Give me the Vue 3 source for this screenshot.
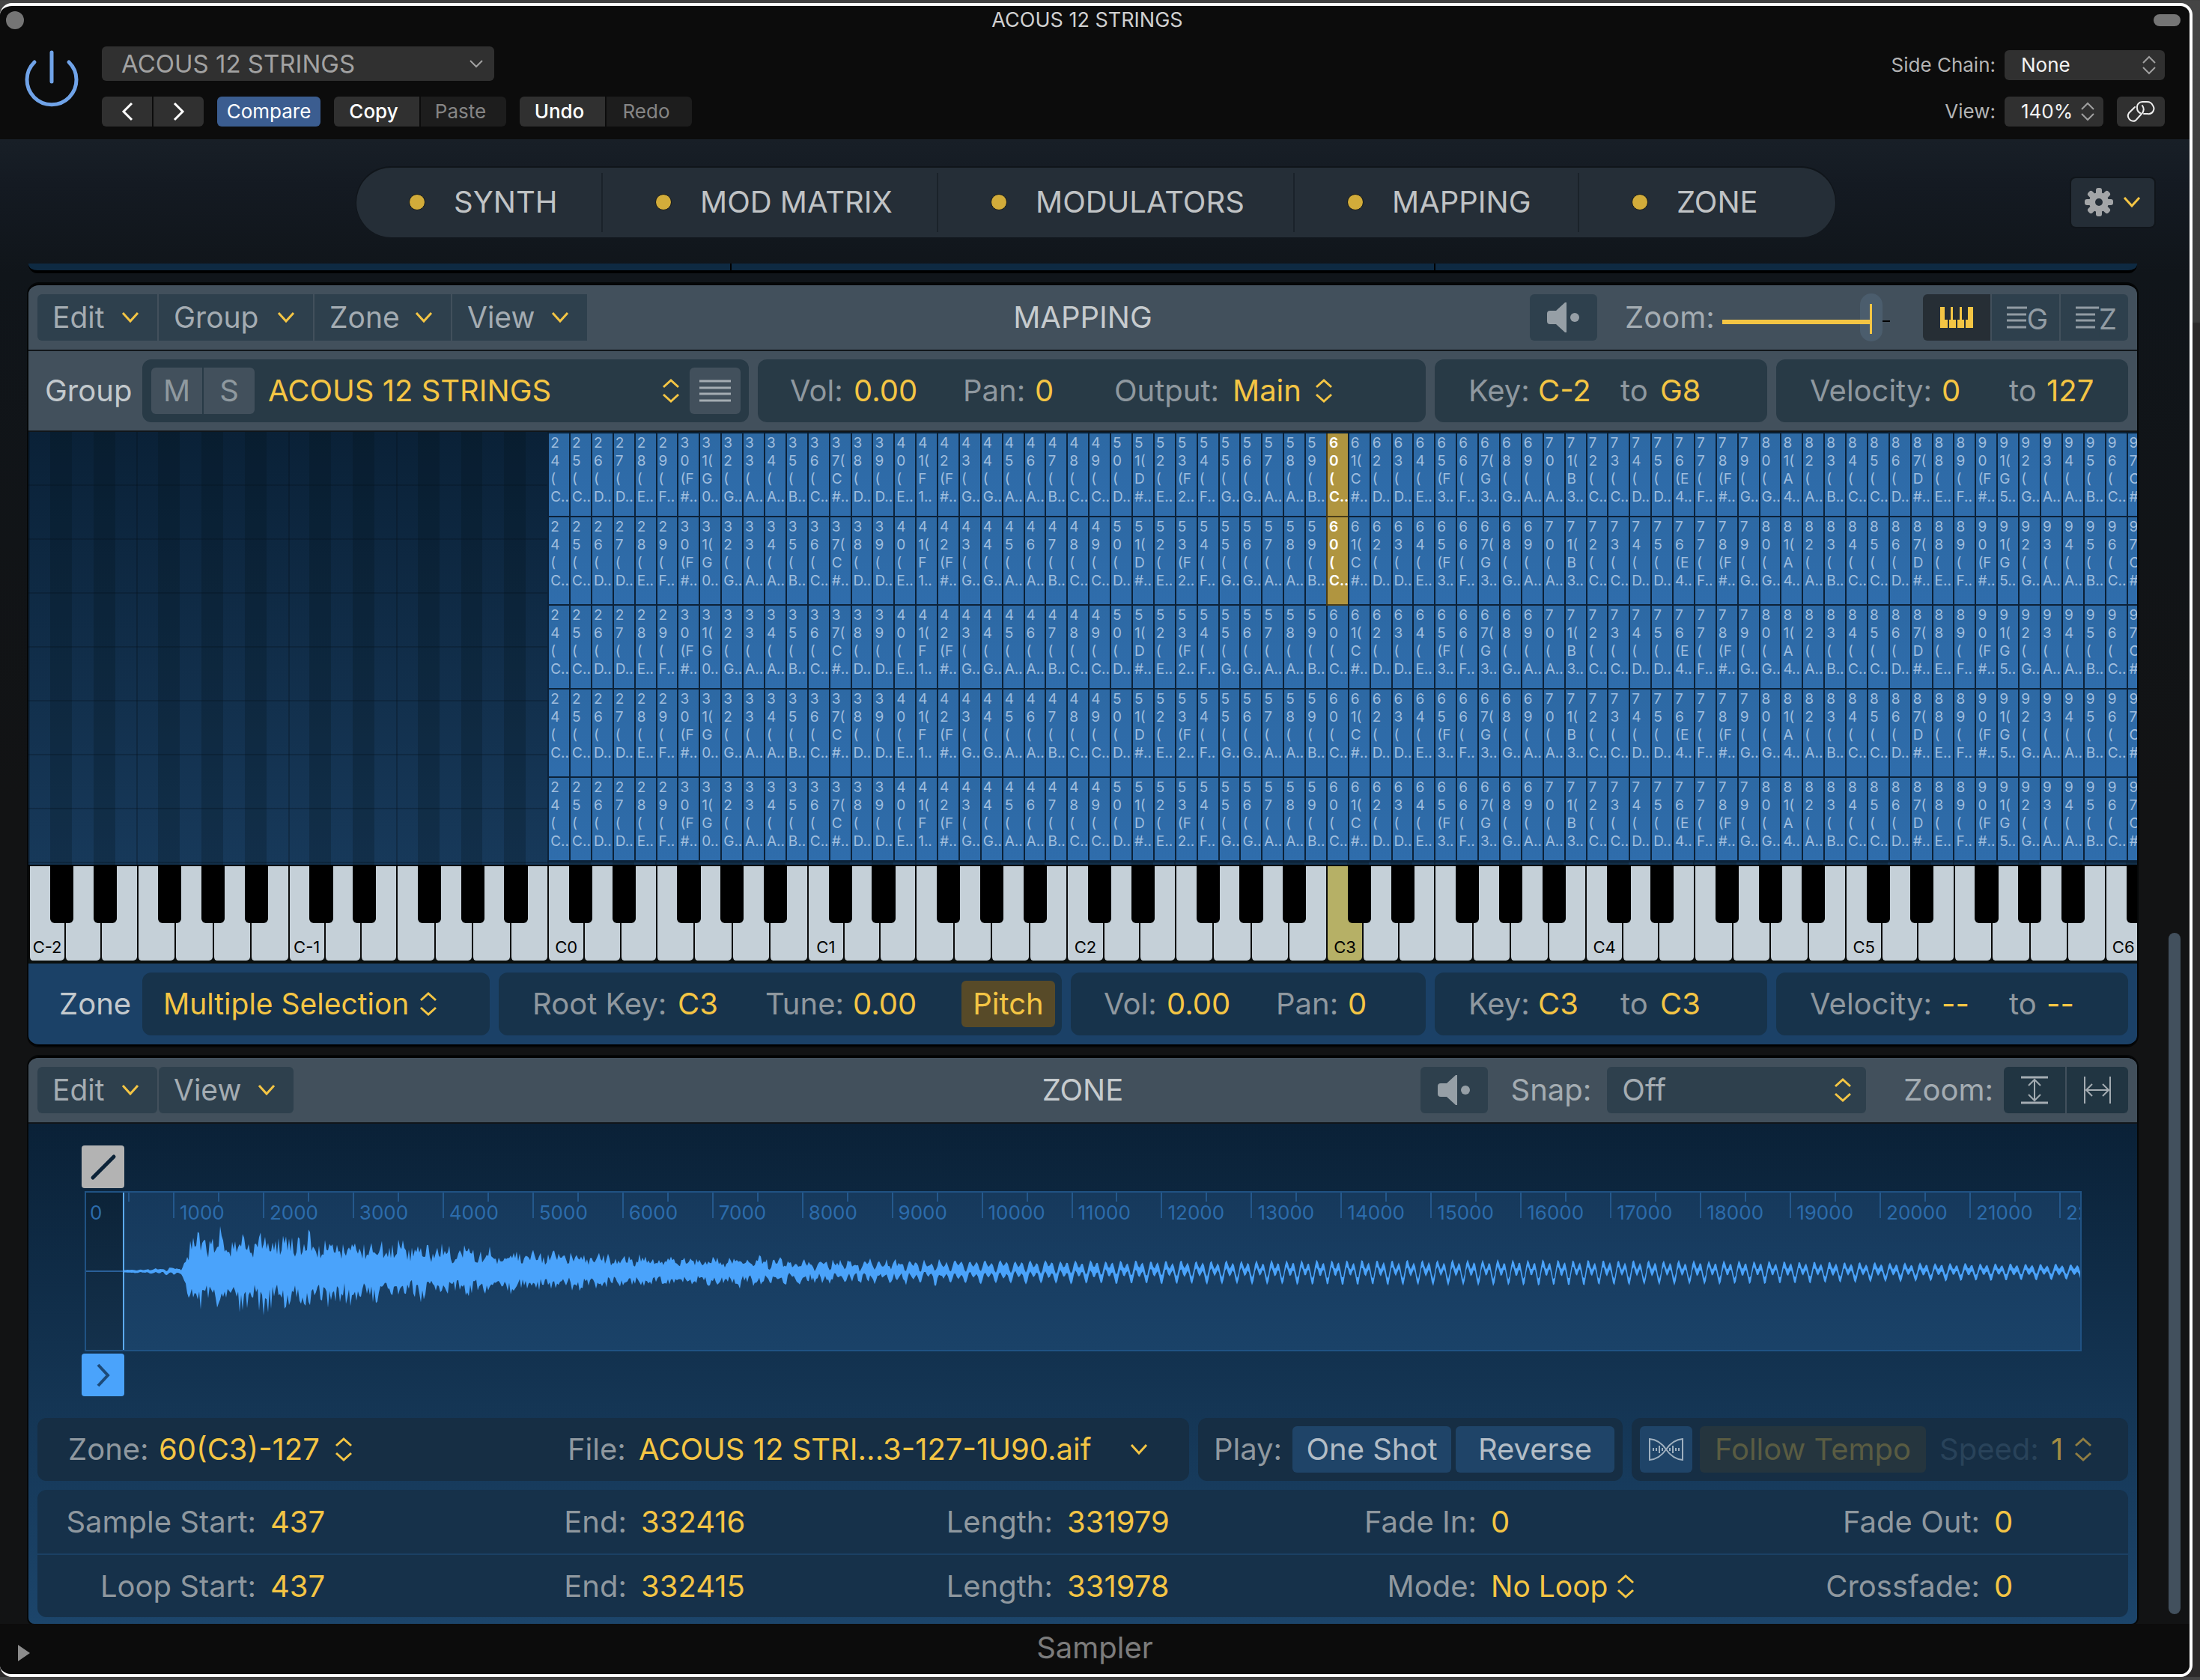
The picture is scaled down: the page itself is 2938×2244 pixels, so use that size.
<script setup>
import { h, ref } from 'vue'

/* ---------- icons ---------- */
const Chevron = () =>
  h('svg', { class: 'ico', width: 24, height: 16, viewBox: '0 0 24 16', 'aria-hidden': 'true' }, [
    h('path', { d: 'M2 2 L12 13 L22 2', fill: 'none', stroke: 'currentColor', 'stroke-width': 3 })
  ])
const UpDown = () =>
  h('svg', { class: 'ico', width: 24, height: 34, viewBox: '0 0 24 34', 'aria-hidden': 'true' }, [
    h('path', { d: 'M2 12 L12 3 L22 12 M2 22 L12 31 L22 22', fill: 'none', stroke: 'currentColor', 'stroke-width': 3 })
  ])
const Speaker = () =>
  h('svg', { class: 'ico', width: 46, height: 42, viewBox: '0 0 46 42', 'aria-hidden': 'true' }, [
    h('path', { d: 'M5 12 H13 L25 1 H27 V41 H25 L13 30 H5 Q1 30 1 26 V16 Q1 12 5 12 Z', fill: 'currentColor' }),
    h('circle', { cx: 38, cy: 21, r: 6, fill: 'currentColor' })
  ])

/* ---------- tabs and menus ---------- */
const tabs = ['SYNTH', 'MOD MATRIX', 'MODULATORS', 'MAPPING', 'ZONE']
const mappingMenus = ['Edit', 'Group', 'Zone', 'View']
const zoneMenus = ['Edit', 'View']
const zoom = ref(95)

/* ---------- key map ---------- */
const SEMITONES_SHOWN = 97.5
const NOTES = ['C', 'C#', 'D', 'D#', 'E', 'F', 'F#', 'G', 'G#', 'A', 'A#', 'B']
const narrowSecond = [31, 41, 51, 61, 71, 81, 91, 37, 67, 87, 97]
const narrowThird = [30, 42, 53, 65, 76, 78, 90]

function zoneLabel(n) {
  const name = NOTES[n % 12]
  const octave = Math.floor(n / 12) - 2
  const [a, b] = String(n)
  const tail = (name.length > 1 ? '#' : octave) + '..'
  if (narrowSecond.includes(n)) return [a, b + '(', name[0], tail].join('\n')
  if (narrowThird.includes(n)) return [a, b, '(' + name[0], tail].join('\n')
  return [a, b, '(', name[0] + '..'].join('\n')
}
const zones = Array.from({ length: 74 }, (_, i) => ({ n: i + 24, label: zoneLabel(i + 24) }))
const lanes = [
  { id: 1, tall: false, picked: true },
  { id: 2, tall: true, picked: true },
  { id: 3, tall: false, picked: false },
  { id: 4, tall: true, picked: false },
  { id: 5, tall: false, picked: false }
]
const semis = Array.from({ length: 98 }, (_, i) => ({ i, black: NOTES[i % 12].length > 1, edge: i % 12 === 5 || i % 12 === 0 }))
const rollWidth = { width: (98 / SEMITONES_SHOWN) * 100 + '%' }
const keysWidth = { width: (108 / SEMITONES_SHOWN) * 100 + '%' }
const octaves = Array.from({ length: 9 }, (_, i) => i - 2)
const whites = [20, 20, 20, 21, 21, 21, 21]
const blacks = [1, 3, 6, 8, 10]

/* ---------- waveform ---------- */
const FRAMES = 22200
const ticks = Array.from({ length: 45 }, (_, i) => ({
  v: i * 500,
  major: i % 2 === 0,
  left: ((i * 500) / FRAMES) * 100 + '%'
})).filter(t => t.v < FRAMES)

let seed = 11
const rnd = () => {
  seed = (seed * 16807) % 2147483647
  return seed / 2147483647
}
const knots = [
  [0, 1], [50, 2], [60, 3], [77, 3], [80, 28], [92, 46], [120, 52], [200, 50], [260, 47], [320, 42], [380, 36],
  [450, 31], [540, 26], [640, 22], [740, 19], [860, 16], [960, 13], [1100, 9], [1300, 6], [1500, 4], [2612, 3]
]
const swings = [[0, 0], [60, 2], [77, 1], [700, 3], [1000, 6], [1300, 10], [1600, 13], [1900, 14], [2200, 12], [2400, 9], [2612, 7]]
function at(table, x) {
  for (let i = 1; i < table.length; i++) {
    const [x0, y0] = table[i - 1]
    const [x1, y1] = table[i]
    if (x <= x1) return y0 + ((y1 - y0) * (x - x0)) / (x1 - x0)
  }
  return table[table.length - 1][1]
}
function waveform() {
  const top = []
  const bottom = []
  for (let x = 0; x <= 2612; x += 2) {
    const env = at(knots, x)
    const swing = at(swings, x)
    const mid = swing * (0.5 * Math.sin(x * 0.312) + 0.65 * Math.sin(x * 0.624 + 1))
    const body = 0.45 + 0.12 * Math.sin(x * 0.21)
    const peak = () => (x < 1100 ? Math.pow(rnd(), 2) * 0.6 : 0.25)
    const line = x > 1000 ? 2 : 1
    top.push(`${x},${(106 - mid - env * (body + peak()) - line).toFixed(1)}`)
    bottom.unshift(`${x},${(106 - mid + env * (body + peak()) + line).toFixed(1)}`)
  }
  return top.concat(bottom).join(' ')
}
const wave = waveform()

/* ---------- sample parameters ---------- */
const params = [
  [['Sample Start:', '437'], ['End:', '332416'], ['Length:', '331979'], ['Fade In:', '0'], ['Fade Out:', '0']],
  [['Loop Start:', '437'], ['End:', '332415'], ['Length:', '331978'], ['Mode:', 'No Loop'], ['Crossfade:', '0']]
]
</script>

<template>
  <div class="window">
    <header class="chrome">
      <div class="titlebar">
        <button class="dot-btn" aria-label="Close"></button>
        <h1>ACOUS 12 STRINGS</h1>
        <button class="pill-btn" aria-label="Minimise"></button>
      </div>
      <div class="toolbar">
        <button class="power" aria-label="Power">
          <svg width="76" height="80" viewBox="0 0 76 80" aria-hidden="true">
            <path d="M15 16 A33 33 0 1 0 61 16" fill="none" stroke="#70a3e8" stroke-width="5" stroke-linecap="round" />
            <path d="M38 3 V42" stroke="#70a3e8" stroke-width="5" stroke-linecap="round" />
          </svg>
        </button>
        <div class="presets">
          <span class="pick preset">
            <select aria-label="Preset"><option>ACOUS 12 STRINGS</option></select>
            <svg class="ico" width="18" height="12" viewBox="0 0 18 12"><path d="M1 2 L9 10 L17 2" fill="none" stroke="currentColor" stroke-width="2" /></svg>
          </span>
          <div class="btnrow">
            <div class="seg">
              <button aria-label="Previous"><svg width="16" height="26" viewBox="0 0 16 26"><path d="M14 2 L3 13 L14 24" fill="none" stroke="currentColor" stroke-width="3" /></svg></button>
              <button aria-label="Next"><svg width="16" height="26" viewBox="0 0 16 26"><path d="M2 2 L13 13 L2 24" fill="none" stroke="currentColor" stroke-width="3" /></svg></button>
            </div>
            <div class="seg one"><button class="on">Compare</button></div>
            <div class="seg edit"><button class="strong">Copy</button><button class="off">Paste</button></div>
            <div class="seg edit"><button class="strong">Undo</button><button class="off">Redo</button></div>
          </div>
        </div>
        <div class="host">
          <div class="hostrow">
            <label for="side">Side Chain:</label>
            <span class="pick side"><select id="side"><option>None</option></select><svg class="ico" width="18" height="26" viewBox="0 0 18 26"><path d="M1 10 L9 2 L17 10 M1 16 L9 24 L17 16" fill="none" stroke="currentColor" stroke-width="2" /></svg></span>
          </div>
          <div class="hostrow">
            <label for="view">View:</label>
            <span class="pick view"><select id="view"><option>140%</option></select><svg class="ico" width="18" height="26" viewBox="0 0 18 26"><path d="M1 10 L9 2 L17 10 M1 16 L9 24 L17 16" fill="none" stroke="currentColor" stroke-width="2" /></svg></span>
            <button class="link" aria-label="Link">
              <svg width="40" height="30" viewBox="0 0 40 30" fill="none" stroke="currentColor" stroke-width="2" stroke-linecap="round">
                <path d="M24 18 H29 A7 7 0 0 0 36 7 Q34 2 28 2 H22 A7 7 0 0 0 15 10 Q15 15 19 17" />
                <path d="M12 9 L4 17 A7 7 0 0 0 13 27 L21 18 Q26 13 22 7" />
              </svg>
            </button>
          </div>
        </div>
      </div>
    </header>

    <main class="plugin">
      <div class="navrow">
        <nav class="tabs">
          <button v-for="t in tabs" :key="t" class="tab"><i class="led"></i>{{ t }}</button>
        </nav>
        <button class="gear" aria-label="Settings">
          <svg width="38" height="38" viewBox="0 0 38 38" aria-hidden="true">
            <g fill="#a3a5a7">
              <rect v-for="a in 4" :key="a" x="15" y="0" width="8" height="38" rx="3" :transform="`rotate(${a * 45} 19 19)`" />
              <circle cx="19" cy="19" r="13" />
            </g>
            <circle cx="19" cy="19" r="5" fill="#242d36" />
          </svg>
          <Chevron />
        </button>
      </div>

      <div class="scroller">
        <div class="panels">
          <div class="prev"><i></i><i></i><i></i></div>

          <section class="panel">
            <div class="head">
              <div class="menus">
                <button v-for="m in mappingMenus" :key="m" class="menu" :class="m.toLowerCase()">{{ m }}<Chevron /></button>
              </div>
              <h2>MAPPING</h2>
              <div class="tools">
                <button class="tool speaker" aria-label="Preview"><Speaker /></button>
                <label for="zoom" class="zoomlabel">Zoom:</label>
                <input id="zoom" v-model="zoom" type="range" min="0" max="100" />
                <div class="views">
                  <button class="tool active" aria-label="Keyboard view">
                    <svg width="44" height="30" viewBox="0 0 44 30"><path d="M0 1 H6 V18 H10 V29 H0 Z M12 18 H14 V1 H17 V18 H21 V29 H12 Z M23 18 H26 V1 H29 V18 H32 V29 H23 Z M34 18 H37 V1 H44 V29 H34 Z" fill="#f4c544" /></svg>
                  </button>
                  <button class="tool list"><svg width="46" height="30" viewBox="0 0 46 30"><path d="M0 2 H46 M0 11 H26 M0 19 H26 M0 28 H26" stroke="currentColor" stroke-width="3" /></svg><span>G</span></button>
                  <button class="tool list"><svg width="46" height="30" viewBox="0 0 46 30"><path d="M0 2 H46 M0 11 H26 M0 19 H26 M0 28 H26" stroke="currentColor" stroke-width="3" /></svg><span>Z</span></button>
                </div>
              </div>
            </div>

            <div class="strip grey">
              <span class="rowname">Group</span>
              <div class="box g-name">
                <div class="ms"><button>M</button><button>S</button></div>
                <span class="pick"><select aria-label="Group name"><option>ACOUS 12 STRINGS</option></select><UpDown /></span>
                <button class="lines" aria-label="Group list"><svg width="42" height="30" viewBox="0 0 42 30"><path d="M0 2 H42 M0 11 H42 M0 19 H42 M0 28 H42" stroke="currentColor" stroke-width="3" /></svg></button>
              </div>
              <div class="box g-out">
                <label for="gvol">Vol:</label><input id="gvol" value="0.00" />
                <label for="gpan">Pan:</label><input id="gpan" value="0" />
                <label for="gout">Output:</label>
                <span class="pick main"><select id="gout"><option>Main</option></select><UpDown /></span>
              </div>
              <div class="box keyr">
                <label for="gk1">Key:</label><input id="gk1" value="C-2" />
                <label for="gk2">to</label><input id="gk2" value="G8" />
              </div>
              <div class="box velr">
                <label for="gv1">Velocity:</label><input id="gv1" value="0" />
                <label for="gv2">to</label><input id="gv2" value="127" />
              </div>
            </div>

            <div class="roll">
              <div class="stripes" :style="rollWidth">
                <i v-for="s in semis" :key="s.i" :class="{ black: s.black, edge: s.edge }"></i>
              </div>
              <div class="lanes" :style="rollWidth">
                <div v-for="l in lanes" :key="l.id" class="lane" :class="{ tall: l.tall }">
                  <div class="empty"></div>
                  <div v-for="z in zones" :key="z.n" class="cell" :class="{ sel: l.picked && z.n === 60 }">{{ z.label }}</div>
                </div>
              </div>
            </div>

            <div class="keyboard">
              <div class="keys" :style="keysWidth">
                <div v-for="o in octaves" :key="o" class="octave">
                  <div v-for="(w, i) in whites" :key="i" class="white" :class="{ hit: o === 3 && i === 0 }" :style="{ flexGrow: w }">
                    <span v-if="i === 0">C{{ o }}</span>
                  </div>
                  <i v-for="b in blacks" :key="b" class="sharp" :style="{ left: (b / 12) * 100 + '%' }"></i>
                </div>
              </div>
            </div>

            <div class="strip blue">
              <span class="rowname zn">Zone</span>
              <div class="box z-name">
                <span class="pick"><select aria-label="Zone name"><option>Multiple Selection</option></select><UpDown /></span>
              </div>
              <div class="box z-root">
                <label for="zroot">Root Key:</label><input id="zroot" value="C3" />
                <label for="ztune">Tune:</label><input id="ztune" value="0.00" />
                <button class="pitch">Pitch</button>
              </div>
              <div class="box z-vol">
                <label for="zvol">Vol:</label><input id="zvol" value="0.00" />
                <label for="zpan">Pan:</label><input id="zpan" value="0" />
              </div>
              <div class="box keyr">
                <label for="zk1">Key:</label><input id="zk1" value="C3" />
                <label for="zk2">to</label><input id="zk2" value="C3" />
              </div>
              <div class="box velr">
                <label for="zv1">Velocity:</label><input id="zv1" value="--" />
                <label for="zv2">to</label><input id="zv2" value="--" />
              </div>
            </div>
          </section>

          <section class="panel last">
            <div class="head">
              <div class="menus apart">
                <button v-for="m in zoneMenus" :key="m" class="menu" :class="m.toLowerCase()">{{ m }}<Chevron /></button>
              </div>
              <h2>ZONE</h2>
              <div class="tools">
                <button class="tool speaker" aria-label="Preview zone"><Speaker /></button>
                <label for="snap" class="snaplabel">Snap:</label>
                <span class="pick snap"><select id="snap"><option>Off</option></select><UpDown /></span>
                <span class="zlabel">Zoom:</span>
                <div class="fit">
                  <button aria-label="Fit height"><svg width="38" height="38" viewBox="0 0 38 38" fill="none" stroke="currentColor" stroke-width="2"><path d="M1 2 H37 M1 36 H37" stroke-width="3" /><path d="M19 6 V32 M11 13 L19 5 L27 13 M11 25 L19 33 L27 25" /></svg></button>
                  <button aria-label="Fit width"><svg width="38" height="38" viewBox="0 0 38 38" fill="none" stroke="currentColor" stroke-width="2"><path d="M2 1 V37 M36 1 V37" /><path d="M5 19 H33 M12 11 L4 19 L12 27 M26 11 L34 19 L26 27" /></svg></button>
                </div>
              </div>
            </div>

            <div class="wavearea">
              <button class="handle fade" aria-label="Fade curve"><svg width="36" height="36" viewBox="0 0 36 36"><path d="M4 32 L32 4" stroke="#0c2338" stroke-width="5" stroke-linecap="round" /></svg></button>
              <div class="wavebox">
                <div class="pre"></div>
                <div class="body">
                  <svg viewBox="0 0 2612 212" preserveAspectRatio="none" aria-label="Waveform"><polygon :points="wave" fill="#4aa3fb" /></svg>
                </div>
                <div class="ruler">
                  <div v-for="t in ticks" :key="t.v" class="tick" :class="{ major: t.major }" :style="{ left: t.left }">
                    <span v-if="t.major">{{ t.v }}</span>
                  </div>
                </div>
              </div>
              <button class="handle start" aria-label="Sample start"><svg width="20" height="32" viewBox="0 0 20 32"><path d="M3 2 L16 16 L3 30" fill="none" stroke="#1c4a78" stroke-width="4" /></svg></button>
            </div>

            <div class="bottom">
              <div class="trio">
                <div class="box file">
                  <label for="zsel">Zone:</label>
                  <span class="pick zpick"><select id="zsel"><option>60(C3)-127</option></select><UpDown /></span>
                  <label for="fsel">File:</label>
                  <span class="pick fpick"><select id="fsel"><option>ACOUS 12 STRI...3-127-1U90.aif</option></select><Chevron /></span>
                </div>
                <div class="box play">
                  <span class="lbl">Play:</span>
                  <button>One Shot</button>
                  <button>Reverse</button>
                </div>
                <div class="box flexp">
                  <button class="flexbtn" aria-label="Flex">
                    <svg width="46" height="30" viewBox="0 0 46 30" fill="none" stroke="currentColor" stroke-width="2"><path d="M1 1 Q14 2 23 15 Q32 28 45 29 V1 Q32 2 23 15 Q14 28 1 29 Z" /><path d="M6 13 V17 M10 13 V17 M14 10 V20 M18 13 V17 M28 13 V17 M32 10 V20 M36 13 V17 M40 13 V17" /></svg>
                  </button>
                  <button class="follow">Follow Tempo</button>
                  <label for="speed">Speed:</label>
                  <span class="pick speed"><select id="speed" disabled><option>1</option></select><UpDown /></span>
                </div>
              </div>
              <div class="params">
                <div v-for="(row, r) in params" :key="r" class="prow">
                  <template v-for="(p, c) in row" :key="c">
                    <label :for="`p${r}${c}`">{{ p[0] }}</label>
                    <span v-if="p[1] === 'No Loop'" class="pick loop"><select :id="`p${r}${c}`"><option>No Loop</option></select><UpDown /></span>
                    <input v-else :id="`p${r}${c}`" :value="p[1]" />
                  </template>
                </div>
              </div>
            </div>
          </section>
        </div>
        <div class="gutter"><i class="thumb"></i></div>
      </div>
    </main>

    <footer class="foot">
      <svg class="play-tri" width="16" height="22" viewBox="0 0 16 22" aria-hidden="true"><path d="M0 0 L16 11 L0 22 Z" fill="#8c8c8c" /></svg>
      <span>Sampler</span>
    </footer>
  </div>
</template>

<style>
body {
  background: linear-gradient(#454545 0, #3a3a3a 430px, #2b2929 432px, #2b2929 100%);
}
</style>

<style scoped>
* { box-sizing: border-box; }
.window {
  margin: 4px 10px 0 0;
  border: 4px solid #fff;
  border-left: 0;
  border-radius: 16px;
  overflow: hidden;
  background: #0c0c0c;
  font-family: Inter, "Liberation Sans", sans-serif;
  font-size: 40px;
  line-height: 48px;
  color: #8f989f;
}
button, select, input {
  font: inherit;
  color: inherit;
  border: 0;
  margin: 0;
  padding: 0;
  background: none;
  min-width: 0;
  border-radius: 0;
}
button { display: flex; align-items: center; justify-content: center; }
select { appearance: none; width: 100%; opacity: 1; text-align: left; }
input { width: 100%; color: #f4c544; }
label { white-space: nowrap; }
h1, h2 { margin: 0; font-weight: 400; }
svg { display: block; flex: none; }
.pick { position: relative; display: flex; align-items: center; color: #f4c544; }
.pick .ico { position: absolute; right: 0; pointer-events: none; }

/* host window chrome */
.titlebar {
  display: grid;
  grid-template-columns: 1fr auto 1fr;
  align-items: center;
  height: 38px;
  padding: 0 12px 0 8px;
  line-height: 32px;
}
.titlebar h1 { font-size: 27px; color: #d0d0d0; margin-right: 16px; }
.dot-btn { width: 24px; height: 24px; border-radius: 50%; background: #757575; }
.pill-btn { width: 36px; height: 16px; border-radius: 8px; background: #757575; justify-self: end; }
.toolbar { display: flex; height: 140px; padding-left: 31px; }
.power { width: 76px; height: 80px; margin-top: 21px; }
.presets { margin: 16px 0 0 29px; }
.preset { width: 524px; height: 46px; background: #303030; border-radius: 6px; color: #a2a2a2; font-size: 33px; }
.preset select { padding-left: 26px; }
.preset .ico { right: 15px; }
.btnrow { display: flex; gap: 18px; margin-top: 21px; font-size: 26px; line-height: 32px; }
.seg { display: flex; gap: 2px; height: 40px; border-radius: 6px; overflow: hidden; color: #fff; }
.seg button { width: 67px; background: #303030; }
.seg.one button { width: 138px; background: #3b5d90; }
.seg.edit button { width: 114px; padding-right: 8px; }
.seg .strong { font-weight: 500; }
.seg .off { background: #1d1d1d; color: #858585; }
.host { margin: 21px 33px 0 auto; display: flex; flex-direction: column; gap: 22px; font-size: 26px; line-height: 36px; }
.hostrow { display: flex; align-items: center; height: 40px; color: #b4b4b4; }
.hostrow label { margin-left: auto; margin-right: 12px; }
.hostrow .pick { height: 40px; background: #303030; border-radius: 6px; color: #f2f2f2; }
.hostrow select { padding-left: 22px; }
.hostrow .ico { right: 12px; color: #a0a0a0; }
.side { width: 214px; }
.view { width: 132px; margin-right: 18px; }
.link { width: 64px; height: 40px; background: #303030; border-radius: 6px; color: #eee; }

/* plug-in */
.plugin { background: linear-gradient(#181f27 0, #141a22 60px, #10151a 180px, #121314 900px, #121314 100%); }
.navrow {
  display: grid;
  grid-template-columns: 1975fr 111fr;
  column-gap: 315px;
  align-items: center;
  height: 166px;
  padding: 2px 47px 0 476px;
}
.tabs {
  display: grid;
  grid-template-columns: 329fr 448fr 476fr 380fr 342fr;
  height: 93px;
  border-radius: 48px;
  background: #252e37;
  box-shadow: 0 -1px 0 1px #10151a;
}
.tab {
  justify-content: flex-start;
  color: #c0c3c5;
  padding-left: 70px;
  margin: 7px 0;
  border-right: 2px solid #1a222a;
}
.tab:last-child { border: 0; }
.led { width: 22px; height: 22px; border-radius: 50%; background: #d2ac3a; border: 1px solid #12171b; margin-right: 38px; }
.gear { height: 65px; border-radius: 6px; background: #242d36; box-shadow: 0 0 0 2px #10151a; gap: 13px; color: #f4c544; }

.scroller { display: flex; }
.panels { flex: 1; min-width: 0; padding-left: 38px; }
.gutter { width: 70px; display: flex; flex-direction: column; align-items: center; }
.gutter::before { content: ""; flex: 894 1 0; }
.gutter::after { content: ""; flex: 13 1 0; }
.thumb { flex: 911 1 0; width: 16px; border-radius: 8px; background: #42505d; margin-left: 30px; }

.prev { display: grid; grid-template-columns: 1fr 1fr 1fr; gap: 2px; height: 13px; margin-bottom: 14px; background: #000; border-bottom: 4px solid #000; border-radius: 0 0 12px 12px; overflow: hidden; }
.prev i { background: #0e2a42; }

.panel { border-radius: 14px; overflow: hidden; border-top: 2px solid #000; border-bottom: 2px solid #000; margin-bottom: 14px; box-shadow: 0 0 0 2px #050708; }
.panel.last { margin-bottom: 0; border-bottom: 0; border-radius: 14px 14px 8px 8px; }
.head {
  display: grid;
  grid-template-columns: 1fr auto 1fr;
  align-items: center;
  height: 88px;
  background: #42505c;
  border-bottom: 2px solid #11161a;
  padding: 0 12px;
  color: #a4acb2;
}
.head h2 { font-size: 40px; color: #c6cbce; }
.menus { display: flex; gap: 2px; border-radius: 6px; overflow: hidden; justify-self: start; }
.menu { height: 62px; background: #2e404d; justify-content: space-between; padding: 0 24px 0 20px; font-size: 39px; }
.menu :deep(.ico) { color: #f4c544; }
.menu.edit { width: 160px; }
.menu.group { width: 206px; }
.menu.zone { width: 182px; }
.menu.view { width: 180px; }
.menus.apart .menu { border-radius: 6px; }
.tools { display: flex; align-items: center; justify-self: end; }
.tool { width: 90px; height: 62px; background: #2e404d; }
.speaker { border-radius: 6px; color: #969fa6; }
.zoomlabel { width: 130px; margin-left: 37px; }
#zoom { appearance: none; width: 224px; height: 64px; margin-right: 44px; background: linear-gradient(#f4c544, #f4c544) 0 60% / 198px 6px no-repeat, linear-gradient(#000, #000) 0 58% / 100% 2px no-repeat; }
#zoom::-webkit-slider-thumb { appearance: none; width: 30px; height: 64px; border-radius: 15px; background: linear-gradient(90deg, transparent 13px, #f4c544 13px, #f4c544 16px, transparent 16px) 0 14px / 30px 40px no-repeat, linear-gradient(#f4c544, #f4c544) 0 35px / 15px 6px no-repeat, #4b5d6d; }
.views { display: flex; gap: 2px; border-radius: 6px; overflow: hidden; }
.active { background: #262e35; }
.list { position: relative; color: #929ca4; }
.list svg { margin-right: 4px; }
.list span { position: absolute; right: 15px; top: 9px; background: #2e404d; font-size: 38px; line-height: 48px; height: 48px; clip-path: inset(7px 0 0 0); }

.strip { display: grid; align-items: center; column-gap: 12px; padding-right: 12px; height: 108px; }
.strip.grey { grid-template-columns: 140fr 810fr 892fr 444fr 470fr; background: #42505c; border-bottom: 2px solid #11161a; }
.strip.blue { grid-template-columns: 140fr 464fr 752fr 474fr 444fr 470fr; background: #1b4167; }
.rowname { color: #c3c9cd; padding-left: 22px; }
.rowname.zn { padding-left: 41px; }
.box { display: grid; align-items: center; height: 84px; border-radius: 12px; min-width: 0; }
.grey .box { background: #283a46; }
.blue .box { background: #17334b; }
.g-name { grid-template-columns: 138px 1fr 68px; padding: 0 11px 0 12px; }
.g-name .pick { margin: 0 13px 0 18px; }
.ms { display: flex; gap: 2px; }
.ms button { flex: 1; height: 62px; background: #42505c; color: #8f999f; }
.ms button:first-child { border-radius: 6px 0 0 6px; }
.ms button:last-child { border-radius: 0 6px 6px 0; }
.lines { height: 62px; border-radius: 6px; background: #42505c; color: #a4acb2; }
.g-out { grid-template-columns: 85fr 146fr 96fr 106fr 158fr 258fr; padding-left: 43px; }
.main { width: 134px; }
.keyr { grid-template-columns: 93fr 110fr 53fr 143fr; padding-left: 45px; }
.velr { grid-template-columns: 176fr 90fr 50fr 109fr; padding-left: 45px; }
.z-name { padding-left: 28px; font-size: 39px; }
.z-name .pick { width: 366px; }
.z-root { grid-template-columns: 194fr 117fr 117fr 145fr 125fr; padding: 0 9px 0 45px; }
.pitch { height: 62px; border-radius: 6px; background: #574a28; color: #f4c544; }
.z-vol { grid-template-columns: 84fr 146fr 96fr 104fr; padding-left: 44px; }

/* key map */
.roll {
  position: relative;
  overflow: hidden;
  padding: 2px 0 4px;
  background: linear-gradient(#0a2137, #17395a);
}
.roll::before { content: ""; position: absolute; inset: 0; background: repeating-linear-gradient(transparent 0 70px, rgba(5, 18, 30, 0.3) 70px 72px); }
.stripes { position: absolute; inset: 0 auto 0 0; display: flex; }
.stripes i { flex: 1; }
.stripes .black { background: rgba(5, 18, 28, 0.26); }
.stripes .edge { box-shadow: inset 2px 0 0 rgba(5, 18, 28, 0.3); }
.lanes { position: relative; }
.lane { display: grid; grid-template-columns: 24fr repeat(74, minmax(0, 1fr)); height: 112px; }
.lane.tall { height: 118px; }
.cell {
  white-space: pre;
  padding: 1px 0 0 2px;
  font-size: 19px;
  line-height: 24px;
  color: #a0bede;
  background: linear-gradient(#2d69a4, #2f6dac);
  border: solid #0c2239;
  border-width: 0 0 2px 2px;
}
.cell.sel { background: #b09540; color: #fff; font-weight: 600; border-color: #4a3d18; }
.keyboard { overflow: hidden; background: #0b100f; border-top: 2px solid #000; height: 132px; padding-bottom: 4px; }
.keys { display: flex; height: 100%; }
.octave { position: relative; display: flex; flex: 1 1 0; }
.white {
  flex: 1 1 0;
  min-width: 0;
  display: flex;
  align-items: flex-end;
  justify-content: center;
  background: #c5d0d8;
  border-left: 2px solid #0a0a0a;
  border-radius: 0 0 5px 5px;
  font-size: 22px;
  line-height: 24px;
  padding-bottom: 6px;
  color: #000;
}
.white.hit { background: #b6b066; }
.sharp { position: absolute; top: 0; width: 9%; height: 76px; background: #000; border-radius: 0 0 6px 6px; }

/* zone editor */
.panel.last { background: linear-gradient(#42505c 88px, #0a2137 88px, #1c456b 100%); }
.speaker + .snaplabel { margin: 0 21px 0 31px; }
.snap { width: 346px; height: 62px; background: #2e404d; border-radius: 6px; color: #a4acb2; }
.snap select { padding-left: 20px; }
.snap .ico { right: 19px; color: #f4c544; }
.zlabel { margin: 0 14px 0 50px; }
.fit { display: flex; gap: 2px; border-radius: 6px; overflow: hidden; }
.fit button { width: 82px; height: 62px; background: #213542; color: #a4acb2; }
.wavearea { padding: 29px 74px 29px 71px; }
.handle { width: 57px; height: 57px; border-radius: 4px; }
.fade { background: #b3b3b3; }
.start { background: #4aa3fb; }
.wavebox { position: relative; display: flex; height: 214px; margin: 4px 0 3px 4px; border: 2px solid #205283; background: #0c2338; overflow: hidden; }
.pre { width: 51px; border-right: 2px solid #5caaf5; background: linear-gradient(#2a6099, #2a6099) 0 50% / 100% 2px no-repeat, linear-gradient(#0c2338, #14314c); }
.body { flex: 1; min-width: 0; background: linear-gradient(#16395c, #1a4268); }
.body svg { width: 100%; height: 100%; }
.ruler { position: absolute; inset: 0 4px auto -4px; }
.tick { position: absolute; top: 0; width: 2px; height: 12px; background: #24588c; }
.tick.major { height: 34px; }
.tick span { position: absolute; left: 9px; top: 12px; font-size: 26px; line-height: 30px; color: #2c6cac; }

.bottom { padding: 0 12px 9px; }
.trio { display: grid; grid-template-columns: 1538fr 567fr 663fr; column-gap: 12px; }
.bottom .box { background: #162e44; }
.file { grid-template-columns: 121fr 546fr 95fr 735fr; padding-left: 41px; }
.zpick { width: 259px; }
.fpick { width: 680px; }
.play { grid-template-columns: 99fr 212fr 212fr; column-gap: 6px; padding: 0 11px 0 21px; }
.play button { height: 62px; border-radius: 6px; background: #1f4468; color: #b3bdc6; }
.flexp { grid-template-columns: 70px 302px 139px 63px; column-gap: 10px; padding-left: 11px; }
.flexbtn { height: 62px; border-radius: 6px; background: #1f4468; color: #9fb0bf; }
.follow { height: 62px; border-radius: 6px; background: #25353e; color: #5a5c42; }
.flexp label { padding-left: 8px; color: #29435a; }
.flexp .pick { color: #8f7d43; margin-left: 8px; }
.flexp select { color: #a38c42; }
.params { margin-top: 12px; border-radius: 12px; overflow: hidden; background: #16314a; }
.prow { display: grid; grid-template-columns: 311fr 259fr 236fr 304fr 265fr 295fr 271fr 309fr 363fr 179fr; align-items: center; height: 85px; }
.prow + .prow { border-top: 2px solid #1b4064; }
.prow label { text-align: right; padding-right: 19px; }
.loop { width: 192px; font-size: 39px; }

.foot { position: relative; display: flex; align-items: center; justify-content: center; height: 67px; padding-bottom: 4px; background: #0c0c0c; color: #7c7c7c; }
.play-tri { position: absolute; left: 24px; bottom: 17px; }
</style>
